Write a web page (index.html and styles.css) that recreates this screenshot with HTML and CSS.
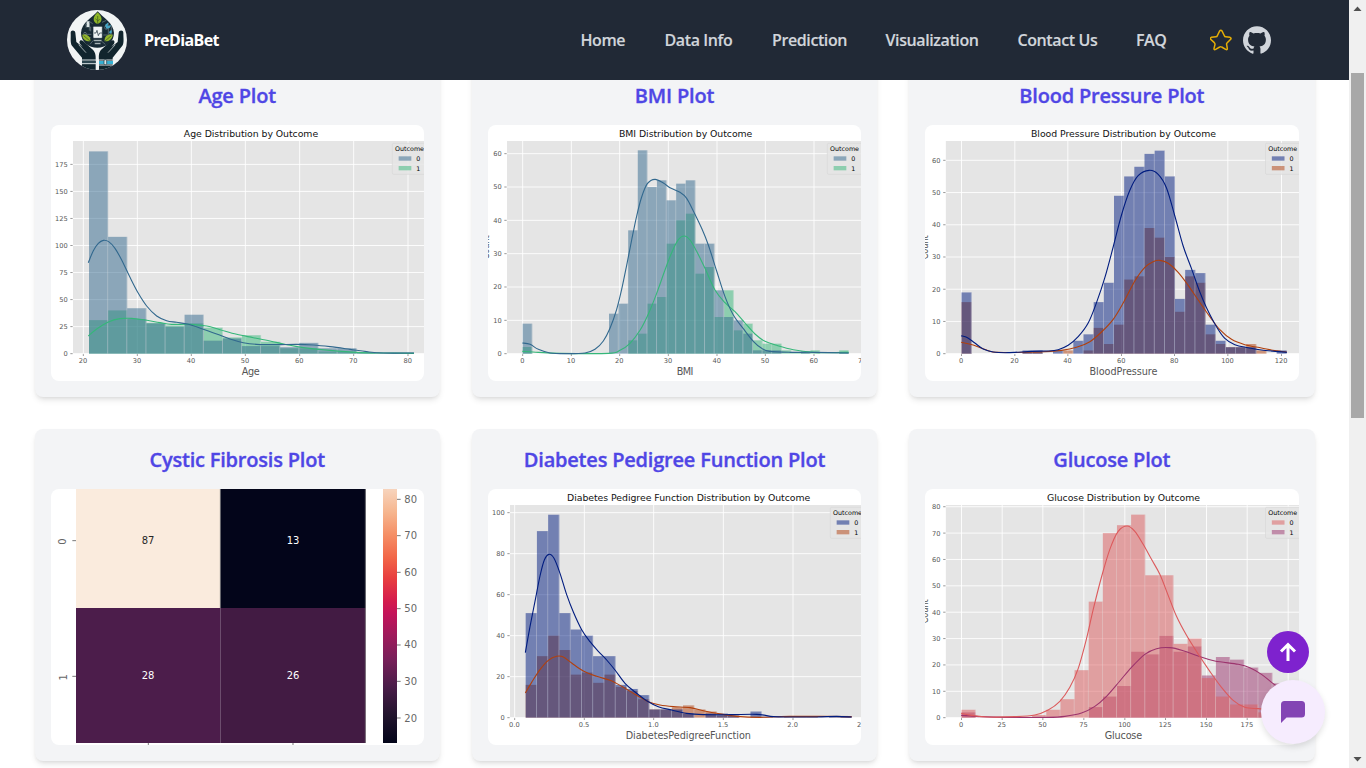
FILE: index.html
```html
<!DOCTYPE html>
<html lang="en">
<head>
<meta charset="utf-8">
<title>PreDiaBet</title>
<link rel="stylesheet" href="styles.css">
</head>
<body>
<div class="page">
  <div class="content">
    <header class="navbar">
      <div class="brand">
        <svg class="logo" viewBox="21 15 180 180">
          <defs><clipPath id="disc"><circle cx="111" cy="105" r="90"/></clipPath></defs>
          <circle cx="111" cy="105" r="90" fill="#f1f4f4"/>
          <g clip-path="url(#disc)">
            <path d="M113 19 C98 37 64 53 63 84 C63 111 86 128 112 128 C140 128 162 110 162 84 C161 54 129 38 113 19Z" fill="#172a35"/>
            <g stroke="#75858b" stroke-width="2" fill="none">
              <path d="M72 88H94M76 66h16v13M88 53v24M68 98h24M130 90h28M134 64h20v23M145 54v34M86 48l12 8M126 52l13-6M90 118l10-12M124 108l12 10"/>
              <circle cx="82" cy="59" r="5"/><circle cx="75" cy="86" r="4"/><circle cx="139" cy="68" r="5"/>
            </g>
            <path d="M135 60l10-8-2 12 10-5-4 10-10 2zM147 81l7-7 2 8-6 5z" fill="#45a6c6"/>
            <path d="M80 49h8v17h-8z" fill="#dce5e6"/>
            <path d="M113 22C97 36 97 52 113 57C129 51 128 36 113 22Z" fill="#8eb526"/>
            <path d="M113 33V57M113 47l-7-6M113 49l6-7" stroke="#385b1d" stroke-width="2"/>
            <path d="M67 89C81 87 93 94 91 109C78 110 67 103 67 89Z" fill="#92b52d"/>
            <path d="M158 89C144 86 132 94 134 109C148 110 157 101 158 89Z" fill="#92b52d"/>
            <path d="M71 92l19 16M154 92l-19 16" stroke="#39551e" stroke-width="2"/>
            <rect x="99" y="64" width="28" height="36" rx="3" fill="#eef4f4" stroke="#172a35" stroke-width="2"/>
            <path d="M102 84h6l3-8 4 16 4-8h7" fill="none" stroke="#172a35" stroke-width="2"/>
            <path d="M101 104h24v5h-24zM104 113h18v5h-18z" fill="#b9c5c7" stroke="#172a35"/>
            <path d="M32 83C32 74 45 74 46 83L49 111L68 126L61 118C54 108 63 101 70 109L96 132C106 140 108 151 107 166L107 195H66V158L36 122C30 114 33 99 32 83Z" fill="#11252e"/>
            <path d="M190 83C190 74 177 74 176 83L173 111L154 126L161 118C168 108 159 101 152 109L126 132C116 140 116 151 117 166V195H158V158L187 122C193 114 190 99 190 83Z" fill="#11252e"/>
            <path d="M56 119l22 24M166 119l-22 24" stroke="#e7eeee" stroke-width="2"/>
            <path d="M64 165h45M64 176h45M117 165h44M117 180h44" stroke="#dbe4e6" stroke-width="3"/>
            <rect x="117" y="168" width="42" height="9" fill="#35afd2"/>
            <rect x="132" y="164" width="8" height="15" rx="3" fill="#d7e6ea" stroke="#18333e" stroke-width="2"/>
            <path d="M66 171h42" stroke="#34515b" stroke-width="5"/>
          </g>
        </svg>
        <span class="brand-name">PreDiaBet</span>
      </div>
      <nav class="links">
        <a class="link link-home">Home</a>
        <a class="link link-data">Data Info</a>
        <a class="link link-prediction">Prediction</a>
        <a class="link link-visual">Visualization</a>
        <a class="link link-contact">Contact Us</a>
        <a class="link link-faq">FAQ</a>
        <svg class="star" viewBox="31 43 66 64"><path d="M60 48Q63.500 43 67 48L74 62Q75 65 78 65L91 67Q96 69 93 73L82 84Q80 86 81 89L83 101Q83 106 78 103L66 96Q63 94 60 96L48 103Q43 106 43 101L46 88Q46 85 44 83L33 73Q31 69 35 67L49 65Q52 65 53 62Z" fill="none" stroke="#e5ae06" stroke-width="4.500"/></svg>
        <svg class="github" viewBox="0 0 24 24"><path fill="#d1d5db" d="M12 .297c-6.63 0-12 5.373-12 12 0 5.303 3.438 9.8 8.205 11.385.6.113.82-.258.82-.577 0-.285-.01-1.04-.015-2.04-3.338.724-4.042-1.61-4.042-1.61C4.422 18.07 3.633 17.7 3.633 17.7c-1.087-.744.084-.729.084-.729 1.205.084 1.838 1.236 1.838 1.236 1.07 1.835 2.809 1.305 3.495.998.108-.776.417-1.305.76-1.605-2.665-.3-5.466-1.332-5.466-5.93 0-1.31.465-2.38 1.235-3.22-.135-.303-.54-1.523.105-3.176 0 0 1.005-.322 3.3 1.23.96-.267 1.98-.399 3-.405 1.02.006 2.04.138 3 .405 2.28-1.552 3.285-1.23 3.285-1.23.645 1.653.24 2.873.12 3.176.765.84 1.23 1.91 1.23 3.22 0 4.61-2.805 5.625-5.475 5.92.42.36.81 1.096.81 2.22 0 1.606-.015 2.896-.015 3.286 0 .315.21.69.825.57C20.565 22.092 24 17.592 24 12.297c0-6.627-5.373-12-12-12"/></svg>
      </nav>
    </header>
    <main class="plots">
      <section class="card"><h2 class="card-title">Age Plot</h2><svg class="plot" id="age" viewBox="63 45 1120 768"></svg></section>
      <section class="card"><h2 class="card-title">BMI Plot</h2><svg class="plot" id="bmi" viewBox="54 45 1120 768"></svg></section>
      <section class="card"><h2 class="card-title">Blood Pressure Plot</h2><svg class="plot" id="bp" viewBox="60.5 45 1120 768"></svg></section>
      <section class="card"><h2 class="card-title">Cystic Fibrosis Plot</h2>
        <svg class="plot" viewBox="63 207 1120 768">
          <defs><linearGradient id="rocket" x1="0" y1="0" x2="0" y2="1">
            <stop offset="0" stop-color="#f7d4bd"/><stop offset=".09" stop-color="#f6b68f"/><stop offset=".18" stop-color="#f58f66"/><stop offset=".27" stop-color="#f26648"/><stop offset=".35" stop-color="#e83f3f"/><stop offset=".44" stop-color="#d41c4d"/><stop offset=".49" stop-color="#c4135a"/><stop offset=".57" stop-color="#a11a5b"/><stop offset=".67" stop-color="#781f59"/><stop offset=".78" stop-color="#491c48"/><stop offset=".89" stop-color="#22142d"/><stop offset="1" stop-color="#03051a"/>
          </linearGradient></defs>
          <rect x="138" y="207" width="433" height="357" fill="#faebdd"/>
          <rect x="571" y="207" width="436" height="357" fill="#03051a"/>
          <rect x="138" y="564" width="433" height="405" fill="#4c1d4b"/>
          <rect x="571" y="564" width="436" height="405" fill="#421b43"/>
          <rect x="1059" y="207" width="42" height="762" fill="url(#rocket)"/>
          <path d="M1006 207V969M571 207V564" stroke="#777" stroke-width="2"/>
          <path d="M127 362h11M127 769h11M355 969v6M789 969v6M1101 238h11M1101 347h11M1101 457h11M1101 566h11M1101 675h11M1101 784h11M1101 894h11" stroke="#777" stroke-width="3"/>
          <g class="heat" text-anchor="middle">
            <text x="354" y="371" fill="#262626">87</text><text x="789" y="371" fill="#fff">13</text>
            <text x="354" y="777" fill="#fff">28</text><text x="789" y="777" fill="#fff">26</text>
            <g fill="#666"><text transform="translate(109 365) rotate(-90)">0</text><text transform="translate(111 772) rotate(-90)">1</text>
            <text x="1142" y="248">80</text><text x="1142" y="357">70</text><text x="1142" y="467">60</text><text x="1142" y="576">50</text><text x="1142" y="685">40</text><text x="1142" y="795">30</text><text x="1142" y="905">20</text></g>
          </g>
        </svg>
      </section>
      <section class="card"><h2 class="card-title">Diabetes Pedigree Function Plot</h2><svg class="plot" id="dpf" viewBox="54 207 1120 768"></svg></section>
      <section class="card"><h2 class="card-title">Glucose Plot</h2><svg class="plot" id="glucose" viewBox="60.5 207 1120 768"></svg></section>
    </main>
  </div>
  <aside class="scrollbar">
    <svg class="arrow" viewBox="0 0 17 17"><path d="M4.5 11L8.5 6.5L12.500 11Z" fill="#505050"/></svg>
    <div class="track"><div class="thumb"></div></div>
    <svg class="arrow" viewBox="0 0 17 17"><path d="M4.500 6L8.500 10.500L12.500 6Z" fill="#505050"/></svg>
  </aside>
</div>
<div class="floating">
  <button class="to-top"><svg viewBox="0 0 42 42"><path d="M21 30V14M14 20.500L21 13.500L28 20.500" fill="none" stroke="#fff" stroke-width="3"/></svg></button>
  <button class="chat"><svg viewBox="0 0 64 64"><path d="M23.500 21H40.500Q44 21 44 24.500V34Q44 37.500 40.500 37.500H25.500L20 43V24.500Q20 21 23.500 21Z" fill="#8344b4"/></svg></button>
</div>
<script src="charts.js"></script>
</body>
</html>
```
FILE: styles.css
```css
* { box-sizing: border-box; }
body { margin: 0; height: 768px; overflow: hidden; background: #fff; font-family: "Open Sans", "Noto Sans", sans-serif; }
.page { display: flex; height: 768px; }
.content { flex: 1; height: 768px; overflow: hidden; }
.navbar { position: relative; z-index: 2; height: 80px; background: #212936; display: flex; align-items: center; justify-content: space-between; padding: 0 78px 0 67px; }
.brand { display: flex; align-items: center; gap: 17px; }
.logo { width: 60px; height: 60px; display: block; }
.brand-name { color: #fff; font-size: 16px; font-weight: 700; line-height: 24px; width: 76px; letter-spacing: -.6px; white-space: nowrap; }
.links { display: flex; align-items: center; gap: 39.500px; }
.link { color: #d1d5db; font-size: 16px; font-weight: 600; line-height: 24px; white-space: nowrap; letter-spacing: -.4px; -webkit-text-stroke: .15px #d1d5db; }
.link-home { width: 44.500px; }
.link-data { width: 68px; }
.link-prediction { width: 74px; }
.link-visual { width: 92.500px; }
.link-contact { width: 79px; }
.link-faq { width: 31px; }
.star { width: 22px; height: 22px; margin-left: 3.500px; }
.github { width: 28px; height: 28px; margin-left: -28.500px; }
.plots { width: 1280px; margin: -15px auto 0; display: grid; grid-template-columns: repeat(3, 1fr); gap: 32px; }
.card { height: 332px; padding: 16px; border-radius: 8px; background: #f3f4f6; box-shadow: 0 4px 6px -1px rgba(0,0,0,.1), 0 2px 4px -2px rgba(0,0,0,.1); }
.card-title { margin: 0 0 16px; color: #4f46e5; font-size: 20px; line-height: 28px; padding-top: 1px; height: 28px; font-weight: 600; text-align: center; white-space: nowrap; letter-spacing: -.2px; -webkit-text-stroke: .35px #4f46e5; }
.plot { display: block; width: 100%; height: 256px; border-radius: 8px; background: #fff; overflow: hidden; font-family: "DejaVu Sans", sans-serif; }
.heat { font-size: 30px; }
.tick { font-size: 20px; fill: #555; }
.caption { font-size: 28px; fill: #111; }
.axis { font-size: 29px; fill: #555; }
.legend { font-size: 19px; fill: #000; }
.scrollbar { width: 17px; height: 768px; background: #f0f0f0; display: flex; flex-direction: column; }
.arrow { width: 17px; height: 17px; flex: none; }
.track { flex: 1; padding: 56px 2px 0; }
.thumb { height: 345px; background: #a8a8a8; }
.floating { position: fixed; z-index: 3; right: 41px; top: 631px; width: 64px; }
.to-top, .chat { display: block; border: 0; padding: 0; border-radius: 50%; }
.to-top { width: 42px; height: 42px; background: #7e22ce; margin: 0 0 7px 6px; }
.chat { width: 64px; height: 64px; background: #f6ecfe; box-shadow: 0 3px 6px rgba(0,0,0,.12); }
.to-top svg, .chat svg { display: block; }
```
FILE: charts.js
```javascript
// All lengths are in thirds of a CSS pixel, the unit of each plot's viewBox.
const viridis = ['#31688e', '#35b779'];
const dark = ['#001c7f', '#b1400d'];
const flare = ['#dc5a5c', '#9c336d'];

const charts = [
  { id: 'age', colors: viridis, left: 129, top: 93, base: 731, unit: 3.245, x0: 177, bw: 57.35,
    title: ['Age Distribution by Outcome', 663, 403], label: ['Age', 662, 54], legendX: 1087,
    xt: [[160,'20'],[322,'30'],[484,'40'],[646,'50'],[809,'60'],[971,'70'],[1134,'80']],
    yt: [0,25,50,75,100,125,150,175],
    a: [187,108,42,28,25,36,12,14,7,7,6,10,5,5,1,1,1],
    b: [31,40,32,28.5,26,28,24,15,17,11,5,5,2,2,1,0,0],
    ca: [[175,458],[190,422],[205,400],[220,391],[236,395],[255,415],[275,450],[300,502],[325,550],[350,588],[380,618],[410,632],[440,637],[475,643],[515,656],[560,672],[600,687],[640,698],[680,703],[740,704],[800,703],[850,705],[900,710],[960,718],[1010,725],[1060,729],[1152,729]],
    cb: [[175,678],[200,657],[235,636],[270,626],[305,625],[345,630],[390,638],[425,643],[480,643],[530,648],[570,659],[620,673],[670,683],[720,693],[770,704],[820,713],[900,721],[980,727],[1060,729],[1152,730]] },
  { id: 'bmi', colors: viridis, left: 111, top: 93, base: 731, unit: 10, x0: 158, bw: 28.780,
    title: ['BMI Distribution by Outcome', 647, 400], label: ['BMI', 645, 50], legendX: 1072, count: [58, 412],
    xt: [[158,'0'],[304,'10'],[449,'20'],[595,'30'],[741,'40'],[886,'50'],[1032,'60'],[1178,'70']],
    yt: [0,10,20,30,40,50,60],
    a: [9,0,0,0,0,0,0,0,0,12,15,37,61,50,52,46,51,52,33,33,19,11,10,6,1,1,1,0,0,.7,0,0,0,.5],
    b: [2,0,0,0,0,0,0,0,0,0,0,4,6,15,17,33,40,42,24,26,11,19,7,9,4,3,3,1,.5,.5,1,0,0,1],
    ca: [[157,699],[180,703],[205,718],[240,729],[290,731],[345,729],[375,718],[400,693],[420,655],[440,598],[455,538],[470,466],[485,390],[500,318],[515,261],[532,221],[555,208],[580,219],[600,233],[630,247],[650,265],[670,303],[695,355],[715,405],[740,483],[765,560],[790,615],[820,656],[850,694],[875,715],[900,724],[960,727],[1030,727],[1136,729]],
    cb: [[157,724],[205,727],[270,730],[415,730],[450,721],[480,700],[510,661],[535,612],[560,550],[585,480],[605,428],[625,389],[643,378],[660,390],[680,424],[705,475],[735,540],[765,578],[795,605],[825,639],[855,672],[885,694],[920,706],[970,719],[1030,727],[1080,728],[1136,727]] },
  { id: 'bp', colors: dark, left: 123, top: 93, base: 731, unit: 9.667, x0: 170, bw: 30.5,
    title: ['Blood Pressure Distribution by Outcome', 656, 555], label: ['BloodPressure', 656, 204], legendX: 1082, count: [70, 412],
    xt: [[170,'0'],[330,'20'],[489,'40'],[650,'60'],[809,'80'],[969,'100'],[1130,'120']],
    yt: [0,10,20,30,40,50,60],
    a: [19,0,0,0,0,0,1,1,0,1,0,4,6,16,22,49,55,58,62,63,55,17,26,25,9,4,2,2,2,0,0,1],
    b: [16,0,0,0,0,0,.6,.8,0,0,1,0,1,8,3,9,23,24,39,36,30,13,24,22,6,3,2,2,3,1,0,0],
    ca: [[169,677],[188,683],[210,699],[235,717],[265,726],[310,728],[380,724],[430,723],[460,719],[490,706],[520,680],[550,639],[575,578],[600,503],[625,411],[650,315],[675,241],[700,197],[733,181],[760,193],[785,234],[810,318],[835,408],[860,476],[885,546],[905,593],[935,650],[960,685],[990,704],[1030,713],[1070,720],[1146,727]],
    cb: [[169,697],[205,705],[245,720],[280,727],[400,726],[470,721],[515,712],[555,695],[590,666],[625,628],[655,579],[690,513],[720,472],[745,455],[765,451],[790,460],[820,487],[850,526],[880,570],[915,620],[945,659],[980,688],[1020,704],[1070,714],[1110,722],[1146,726]] },
  { id: 'dpf', colors: dark, left: 120, top: 255, base: 893, unit: 6.15, x0: 167, bw: 33.720,
    title: ['Diabetes Pedigree Function Distribution by Outcome', 656, 730], label: ['DiabetesPedigreeFunction', 655, 376], legendX: 1081,
    xt: [[134,'0.0'],[343,'0.5'],[551,'1.0'],[760,'1.5'],[969,'2.0'],[1178,'2.5']],
    yt: [0,20,40,60,80,100],
    a: [51,91,99,51,43,40,30,30,16,14,11,4,4,4,2,0,2,2,1,0,3,.5,0,0,0,0,0,.6,.6],
    b: [16,30,40,33,21,22,17,21,15,13,9,4,4,5,6,4,3,1,1,0,0,0,0,.5,.5,.5,0,0,.6],
    ca: [[166,698],[180,620],[195,544],[210,468],[223,420],[237,403],[252,415],[270,460],[290,524],[310,576],[335,629],[360,665],[385,694],[410,720],[435,750],[465,790],[495,816],[530,842],[565,860],[605,870],[650,880],[700,884],[780,884],[860,883],[910,890],[960,891],[1040,891],[1100,889],[1145,891]],
    cb: [[166,819],[185,787],[210,749],[235,721],[260,709],[280,711],[305,729],[340,753],[380,769],[420,781],[455,799],[500,826],[535,845],[570,855],[610,860],[660,863],[700,872],[740,880],[800,889],[870,892],[960,889],[1145,890]] },
  { id: 'glucose', colors: flare, left: 123, top: 255, base: 893, unit: 7.91, x0: 170, bw: 42.400,
    title: ['Glucose Distribution by Outcome', 656, 459], label: ['Glucose', 656, 112], legendX: 1082, count: [70, 574],
    xt: [[170,'0'],[292,'25'],[414,'50'],[537,'75'],[660,'100'],[782,'125'],[905,'150'],[1027,'175'],[1150,'200']],
    yt: [0,10,20,30,40,50,60,70,80],
    a: [3,0,0,0,0,1,3,7,18,44,70,73,77,54,54,28,30,15,8,5,5,2,2],
    b: [2,0,0,0,0,0,0,0,0,4,8,12,25,24,31,25,27,16,23,22,19,17,13],
    ca: [[169,880],[200,886],[250,891],[330,890],[390,885],[430,870],[465,844],[495,802],[520,746],[545,656],[565,569],[590,471],[615,388],[640,334],[667,318],[690,334],[715,373],[740,418],[765,463],[790,526],[815,589],[845,646],[880,702],[915,754],[950,802],[985,841],[1020,862],[1060,866],[1100,868]],
    cb: [[169,886],[230,890],[300,892],[430,892],[480,889],[530,879],[570,859],[605,829],[645,783],[680,742],[720,703],[755,686],[795,683],[835,692],[880,708],[930,723],[1000,733],[1035,743],[1070,763],[1100,787],[1120,801]] }
];

const SVG = 'http://www.w3.org/2000/svg';

function add(parent, tag, attrs, text) {
  const el = document.createElementNS(SVG, tag);
  for (const k in attrs) el.setAttribute(k, attrs[k]);
  if (text !== undefined) el.textContent = text;
  parent.appendChild(el);
  return el;
}

// Catmull-Rom spline through the density samples.
function smooth(p) {
  let d = 'M' + p[0];
  for (let i = 0; i < p.length - 1; i++) {
    const a = p[i - 1] || p[i], b = p[i], c = p[i + 1], e = p[i + 2] || c;
    d += 'C' + [b[0] + (c[0] - a[0]) / 6, b[1] + (c[1] - a[1]) / 6, c[0] - (e[0] - b[0]) / 6, c[1] - (e[1] - b[1]) / 6, c[0], c[1]].join(' ');
  }
  return d;
}

function draw(c) {
  const s = document.getElementById(c.id);
  add(s, 'rect', { x: c.left, y: c.top, width: 1200, height: c.base - c.top, fill: '#e5e5e5' });
  for (const [x, t] of c.xt) {
    add(s, 'path', { d: `M${x} ${c.top}V${c.base}`, stroke: '#fff', 'stroke-width': 2.6 });
    add(s, 'path', { d: `M${x} ${c.base}v7`, stroke: '#666', 'stroke-width': 2 });
    add(s, 'text', { x: x - 1, y: c.base + 29, 'text-anchor': 'middle', class: 'tick' }, t);
  }
  for (const v of c.yt) {
    const y = c.base - v * c.unit;
    add(s, 'path', { d: `M${c.left} ${y}H1200`, stroke: '#fff', 'stroke-width': 2.6 });
    add(s, 'path', { d: `M${c.left - 8} ${y}h7`, stroke: '#666', 'stroke-width': 2 });
    add(s, 'text', { x: c.left - 16, y: y + 7.5, 'text-anchor': 'end', class: 'tick' }, v);
  }
  [[c.b, 1], [c.a, 0]].forEach(([bins, k]) => bins.forEach((v, i) => {
    if (!v) return;
    const x = c.x0 + i * c.bw, h = v * c.unit;
    add(s, 'rect', { x, y: c.base - h, width: c.bw, height: h, fill: c.colors[k], 'fill-opacity': .5 });
    add(s, 'path', { d: `M${x + c.bw - 1} ${c.base - h}V${c.base}`, stroke: '#e5e5e5', 'stroke-opacity': .55, 'stroke-width': 2 });
  }));
  add(s, 'path', { d: smooth(c.cb), fill: 'none', stroke: c.colors[1], 'stroke-width': 3.3 });
  add(s, 'path', { d: smooth(c.ca), fill: 'none', stroke: c.colors[0], 'stroke-width': 3.3 });
  add(s, 'text', { x: c.title[1] - c.title[2] / 2, y: c.top - 13, textLength: c.title[2], class: 'caption' }, c.title[0]);
  add(s, 'text', { x: c.label[1] - c.label[2] / 2, y: c.base + 63, textLength: c.label[2], class: 'axis' }, c.label[0]);
  if (c.count) add(s, 'text', { transform: `translate(${c.count}) rotate(-90)`, x: -36, textLength: 72, lengthAdjust: 'spacingAndGlyphs', class: 'axis' }, 'Count');
  const x = c.legendX, y = c.top + 7;
  add(s, 'rect', { x, y, width: 110, height: 93, rx: 4, fill: '#e5e5e5', 'fill-opacity': .85, stroke: '#d8d8d8', 'stroke-width': 2 });
  add(s, 'text', { x: x + 8, y: y + 24, textLength: 87, class: 'legend' }, 'Outcome');
  c.colors.forEach((color, i) => {
    add(s, 'rect', { x: x + 19, y: y + 39 + i * 29, width: 38, height: 13, fill: color, 'fill-opacity': .5 });
    add(s, 'text', { x: x + 72, y: y + 53 + i * 29, class: 'legend' }, i);
  });
}

charts.forEach(draw);
```
